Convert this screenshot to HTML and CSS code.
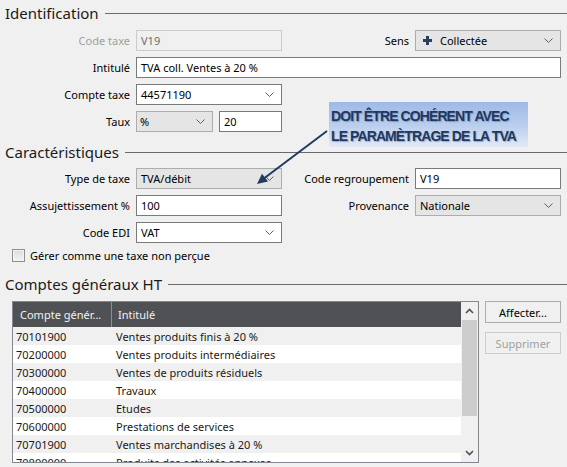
FILE: index.html
```html
<!DOCTYPE html>
<html lang="fr">
<head>
<meta charset="utf-8">
<title>Taxe</title>
<link rel="stylesheet" href="styles.css">
</head>
<body>
<div class="page">
  <div class="title t-ident"><span>Identification</span><i class="rule"></i></div>
  <div class="grid g-ident">
    <div class="lbl lbl-disabled">Code taxe</div>
    <div class="field field-disabled">V19</div>
    <div class="lbl lbl-r">Sens</div>
    <div class="field combo">
      <svg class="plus" width="9" height="9" viewBox="0 0 9 9"><path d="M3 0H6V3H9V6H6V9H3V6H0V3H3Z" fill="#2c3c5e"/></svg>
      <span class="sens-text">Collectée</span>
      <svg class="chev" width="9" height="5" viewBox="0 0 9 5"><polyline points="0.5,0.5 4.5,4.5 8.5,0.5" fill="none" stroke="#606060" stroke-width="1"/></svg>
    </div>
    <div class="lbl">Intitulé</div>
    <div class="field span3">TVA coll. Ventes à 20 %</div>
    <div class="lbl">Compte taxe</div>
    <div class="field">44571190
      <svg class="chev" width="9" height="5" viewBox="0 0 9 5"><polyline points="0.5,0.5 4.5,4.5 8.5,0.5" fill="none" stroke="#606060" stroke-width="1"/></svg>
    </div>
    <div class="lbl">Taux</div>
    <div class="taux">
      <div class="field combo taux-sel">%
        <svg class="chev" width="9" height="5" viewBox="0 0 9 5"><polyline points="0.5,0.5 4.5,4.5 8.5,0.5" fill="none" stroke="#606060" stroke-width="1"/></svg>
      </div>
      <div class="field taux-val">20</div>
    </div>
  </div>

  <div class="title t-carac"><span>Caractéristiques</span><i class="rule"></i></div>
  <div class="grid g-carac">
    <div class="lbl">Type de taxe</div>
    <div class="field combo">TVA/débit
      <svg class="chev" width="9" height="5" viewBox="0 0 9 5"><polyline points="0.5,0.5 4.5,4.5 8.5,0.5" fill="none" stroke="#606060" stroke-width="1"/></svg>
    </div>
    <div class="lbl lbl-r">Code regroupement</div>
    <div class="field">V19</div>
    <div class="lbl">Assujettissement %</div>
    <div class="field">100</div>
    <div class="lbl lbl-r">Provenance</div>
    <div class="field combo">Nationale
      <svg class="chev" width="9" height="5" viewBox="0 0 9 5"><polyline points="0.5,0.5 4.5,4.5 8.5,0.5" fill="none" stroke="#606060" stroke-width="1"/></svg>
    </div>
    <div class="lbl">Code EDI</div>
    <div class="field">VAT
      <svg class="chev" width="9" height="5" viewBox="0 0 9 5"><polyline points="0.5,0.5 4.5,4.5 8.5,0.5" fill="none" stroke="#606060" stroke-width="1"/></svg>
    </div>
  </div>
  <div class="check-row"><span class="checkbox"></span><span>Gérer comme une taxe non perçue</span></div>

  <div class="title t-comptes"><span>Comptes généraux HT</span><i class="rule"></i></div>
  <div class="comptes">
    <div class="table">
      <div class="tbody">
        <div class="thead"><span class="c1">Compte génér...</span><span class="c2">Intitulé</span></div>
        <div class="row"><span class="c1">70101900</span><span class="c2">Ventes produits finis à 20 %</span></div>
        <div class="row"><span class="c1">70200000</span><span class="c2">Ventes produits intermédiaires</span></div>
        <div class="row"><span class="c1">70300000</span><span class="c2">Ventes de produits résiduels</span></div>
        <div class="row"><span class="c1">70400000</span><span class="c2">Travaux</span></div>
        <div class="row"><span class="c1">70500000</span><span class="c2">Etudes</span></div>
        <div class="row"><span class="c1">70600000</span><span class="c2">Prestations de services</span></div>
        <div class="row"><span class="c1">70701900</span><span class="c2">Ventes marchandises à 20 %</span></div>
        <div class="row"><span class="c1">70800000</span><span class="c2">Produits des activités annexes</span></div>
      </div>
      <div class="scrollbar">
        <div class="sb-btn"><svg width="9" height="6" viewBox="0 0 9 6"><polyline points="1,5 4.5,1.5 8,5" fill="none" stroke="#505050" stroke-width="1.6"/></svg></div>
        <div class="sb-thumb"></div>
        <div class="sb-track"></div>
        <div class="sb-btn"><svg width="9" height="6" viewBox="0 0 9 6"><polyline points="1,1 4.5,4.5 8,1" fill="none" stroke="#505050" stroke-width="1.6"/></svg></div>
      </div>
    </div>
    <div class="buttons">
      <div class="btn">Affecter...</div>
      <div class="btn btn-disabled">Supprimer</div>
    </div>
  </div>

  <div class="callout">DOIT ÊTRE COHÉRENT AVEC<br>LE PARAMÈTRAGE DE LA TVA</div>
  <svg class="arrow" width="85" height="65" viewBox="0 0 85 65">
    <line x1="77" y1="6" x2="14.5" y2="53" stroke="#1f3b63" stroke-width="2"/>
    <polygon points="7,59 18,56.5 12,48.8" fill="#1f3b63"/>
  </svg>
</div>
</body>
</html>
```
FILE: styles.css
```css
* { box-sizing: border-box; }
html, body { margin: 0; padding: 0; }
body {
  background: #f0f0f0;
  font-family: "Noto Sans", "Open Sans", sans-serif;
  font-size: 11px;
  color: #000;
}
.page {
  position: relative;
  width: 567px;
  height: 467px;
  overflow: hidden;
}
.title {
  display: flex;
  align-items: center;
  height: 26px;
  padding-left: 5px;
  font-size: 15px;
  color: #1a1a1a;
}
.title .rule {
  flex: 1;
  height: 1px;
  background: #6a6a6a;
  margin-left: 6px;
}
.g-ident { margin-top: 4px; }
.t-carac { margin-top: 7px; }
.g-carac { margin-top: 3px; }
.t-comptes { margin-top: 8px; }

.grid {
  display: grid;
  grid-template-columns: 130px 146px 121px 146px;
  column-gap: 6px;
  row-gap: 6px;
  grid-auto-rows: 21px;
}
.lbl {
  grid-column: 1;
  text-align: right;
  align-self: center;
  white-space: nowrap;
}
.lbl.lbl-r { grid-column: 3; }
.lbl-disabled { color: #a0a0a0; }
.field {
  height: 21px;
  display: flex;
  align-items: center;
  padding: 0 7px 0 4px;
  border: 1px solid #7a7a7a;
  background: #fff;
  white-space: nowrap;
}
.field-disabled {
  background: #f0f0f0;
  border-color: #cccccc;
  color: #6d6d6d;
}
.combo {
  background: #e5e5e5;
  border-color: #adadad;
}
.chev { margin-left: auto; }
.plus { margin: 0 8px 0 3px; }
.span3 { grid-column: 2 / 5; }
.taux {
  display: flex;
  gap: 6px;
}
.taux-sel { width: 77px; padding-left: 3px; }
.taux-val { width: 63px; }

.check-row {
  display: flex;
  align-items: center;
  gap: 5px;
  margin-top: 5px;
  padding-left: 12px;
  height: 15px;
}
.checkbox {
  width: 13px;
  height: 13px;
  border: 1px solid #8e8f8f;
  background: linear-gradient(#dcdcdc, #f4f4f4);
  box-shadow: inset 0 0 0 1px #f4f4f4;
}

.comptes {
  display: flex;
  gap: 6px;
  margin-top: 4px;
  padding-left: 12px;
}
.table {
  width: 467px;
  height: 162px;
  border: 1px solid #828790;
  background: #fff;
  display: flex;
  overflow: hidden;
}
.tbody {
  flex: 1;
  overflow: hidden;
}
.thead {
  display: flex;
  height: 25px;
  align-items: center;
  background: #4f5155;
  color: #f2f2f2;
}
.thead .c1 {
  width: 99px;
  padding-left: 7px;
  border-right: 1px solid #8e8e8e;
  height: 25px;
  line-height: 25px;
}
.thead .c2 { padding-left: 6px; }
.row {
  display: flex;
  height: 18px;
  align-items: center;
  color: #1a1a1a;
}
.row:nth-child(even) { background: #f0f0f0; }
.row .c1 { width: 100px; padding-left: 3px; }
.row .c2 { padding-left: 3px; }

.scrollbar {
  width: 17px;
  display: flex;
  flex-direction: column;
  background: #f0f0f0;
}
.sb-btn {
  height: 18px;
  display: flex;
  align-items: center;
  justify-content: center;
}
.sb-thumb {
  height: 96px;
  margin: 0 1px 0 1px;
  background: #cdcdcd;
}
.sb-track { flex: 1; }

.buttons {
  display: flex;
  flex-direction: column;
  gap: 9px;
}
.btn {
  width: 76px;
  height: 22px;
  border: 1px solid #adadad;
  background: #f0f0f0;
  display: flex;
  align-items: center;
  justify-content: center;
  color: #000;
}
.btn-disabled {
  border-color: #cccccc;
  color: #a0a0a0;
}

.callout {
  position: absolute;
  left: 329px;
  top: 102px;
  width: 199px;
  height: 45px;
  padding: 4px 0 0 2px;
  background: linear-gradient(180deg, #9fb9e7 0%, #bccfee 55%, #e3eaf7 100%);
  font-family: "Liberation Sans", Arial, sans-serif;
  font-weight: bold;
  font-size: 14px;
  line-height: 20px;
  letter-spacing: -0.9px;
  color: #1d3963;
  text-shadow: 1px 1px 1px rgba(20, 40, 80, 0.3);
  white-space: nowrap;
}
.arrow {
  position: absolute;
  left: 250px;
  top: 125px;
}
```
